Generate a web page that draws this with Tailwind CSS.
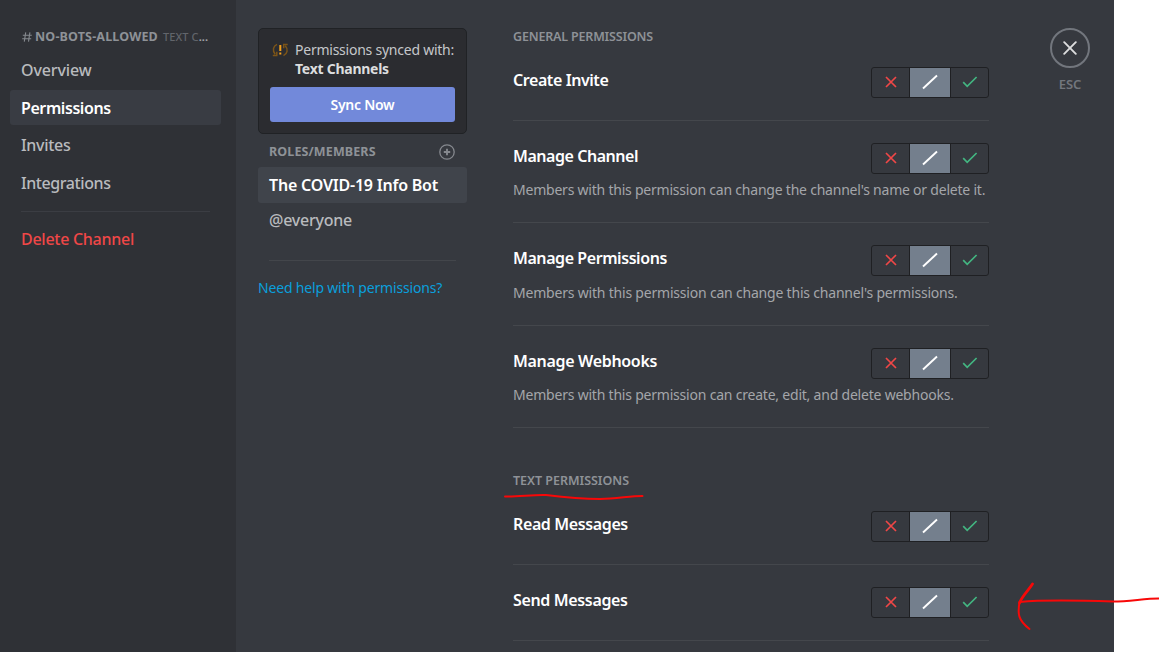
<!DOCTYPE html>
<html lang="en">
<head>
<meta charset="utf-8">
<title>Channel permissions</title>
<script src="https://cdn.jsdelivr.net/npm/@tailwindcss/browser@4"></script>
</head>
<body class="bg-white font-['Noto_Sans',sans-serif] whitespace-nowrap overflow-hidden">
<svg class="hidden">
  <symbol id="deny" viewBox="0 0 12 12"><path d="M1 1 11 11M11 1 1 11" fill="none" stroke="#f04747" stroke-width="1.7"/></symbol>
  <symbol id="pass" viewBox="0 0 16 16"><path d="M1 14.5 15 1.5" fill="none" stroke="#fff" stroke-width="1.9"/></symbol>
  <symbol id="allow" viewBox="0 0 16 12"><path d="M1.2 6.2 5.2 10.3 14.6 1" fill="none" stroke="#43b581" stroke-width="1.7"/></symbol>
</svg>
<div class="relative h-[652px] overflow-hidden">
  <div class="flex h-full w-[1114px] bg-[#36393f]">

    <nav class="w-[236px] shrink-0 bg-[#2f3136] pl-[10px] pt-[27px] text-base leading-5 font-medium text-[#b9bbbe]">
      <div class="flex h-5 items-center pl-[11px] text-xs text-[#8e9297]">
        <svg class="ml-px mr-[3px] size-[10px]" viewBox="0 0 10 10"><path d="M3.700.3 2.300 9.700M7.900.3 6.500 9.700M.8 3.200h9M.2 6.800h9" fill="none" stroke="#85898e" stroke-width="1.100"/></svg>
        <span class="w-[128px] text-[12.5px] font-bold tracking-[0.17px]">NO-BOTS-ALLOWED</span>
        <span class="text-[11px] tracking-[0.1px] text-[#62656b]">TEXT C<b class="text-[#a0a3a8]">...</b></span>
      </div>
      <ul class="mt-[6px] flex flex-col gap-[3px]">
        <li class="flex h-[34px] w-[211px] items-center pl-[11px] tracking-[-0.1px]">Overview</li>
        <li class="flex h-[35px] w-[211px] items-center rounded-[3px] bg-[#393c43] pl-[11px] font-semibold tracking-[-0.42px] text-white">Permissions</li>
        <li class="flex h-[34px] w-[211px] items-center pl-[11px] tracking-[-0.3px]">Invites</li>
        <li class="flex h-[35px] w-[211px] items-center pl-[11px] tracking-[-0.42px]">Integrations</li>
      </ul>
      <div class="ml-[11px] mt-[11px] h-px w-[189px] bg-[#3b3d43]"></div>
      <div class="mt-[10px] flex h-[34px] items-center pl-[11px] tracking-[-0.27px] text-[#f04747]">Delete Channel</div>
    </nav>

    <aside class="ml-[22px] mt-7 w-[209px] shrink-0">
      <div class="h-[106px] rounded-[5px] border border-[#202225] bg-[#2b2c30] px-[11px] pt-[11px]">
        <div class="flex text-sm leading-[19px] text-[#c5c7ca]">
          <svg class="ml-[2px] mt-[2px] mr-[6px] h-[16px] w-[17px]" viewBox="0 0 17 16" fill="none">
            <path d="M5 2.400C1 4.200.2 8.800 3.200 12.200M.8 13.500h4V9.800M11.500 13.600C15.500 11.800 16.300 7.200 13.300 3.800M15.700 2.500h-4v3.700" stroke="#7c5518" stroke-width="1.500"/>
            <path d="M8.300 3v6M8.300 10.500v2" stroke="#f3a01c" stroke-width="2"/>
          </svg>
          <div>
            <div class="tracking-[-0.24px]">Permissions synced with:</div>
            <div class="font-bold tracking-[-0.26px] text-[#dcddde]">Text Channels</div>
          </div>
        </div>
        <button class="mt-[9px] block h-[35px] w-full rounded-[3px] bg-[#7289da] text-sm font-semibold tracking-[-0.26px] text-white">Sync Now</button>
      </div>
      <div class="flex h-[33px] items-center justify-between pl-[11px] pr-3 pt-[3px] text-[12.5px] font-bold tracking-[0.12px] text-[#8e9297]">
        <span class="pt-px">ROLES/MEMBERS</span>
        <svg class="size-4" viewBox="0 0 16 16" fill="none" stroke="#85888e"><circle cx="8" cy="8" r="7.200" stroke-width="1.300"/><path d="M8 4.800v6.400M4.800 8h6.400" stroke-width="1.900"/></svg>
      </div>
      <div class="flex h-9 items-center rounded-[3px] bg-[#40444b] pl-[11px] text-base font-semibold tracking-[-0.21px] text-white">The COVID-19 Info Bot</div>
      <div class="flex h-[35px] items-center pb-[2px] pl-[11px] text-base font-medium tracking-[-0.23px] text-[#b9bbbe]">@everyone</div>
      <div class="ml-[11px] mt-[22px] h-px w-[187px] bg-[#43464b]"></div>
      <a class="mt-[17px] block text-sm tracking-[-0.18px] text-[#0a9fdc]">Need help with permissions?</a>
    </aside>

    <main class="ml-[46px] w-[476px] shrink-0 pt-[27px]">
      <h2 class="h-10 text-[12.5px] leading-5 font-semibold tracking-[-0.18px] text-[#8e9297]">GENERAL PERMISSIONS</h2>
      <div id="general"></div>
      <h2 class="mt-[43px] h-10 text-[12.5px] leading-5 font-semibold tracking-[-0.02px] text-[#8e9297]">TEXT PERMISSIONS</h2>
      <div id="text"></div>
    </main>

    <div class="ml-[61px] mt-7 flex w-10 flex-col items-center">
      <div class="flex size-10 items-center justify-center rounded-full border-2 border-[#72767d]">
        <svg class="size-[14px]" viewBox="0 0 14 14"><path d="M1.200 1.200 12.800 12.800M12.800 1.200 1.200 12.800" stroke="#dcddde" stroke-width="1.900" stroke-linecap="round"/></svg>
      </div>
      <span class="mt-2 text-[13px] leading-4 font-semibold text-[#72767d]">ESC</span>
    </div>
  </div>

  <svg class="absolute inset-0 h-full w-full" viewBox="0 0 1159 652" fill="none" stroke="#f80808" stroke-linecap="round">
    <path d="M505 496.500C520 496.500 534 494.500 546 495C566 497.500 580 499 600 499C618 498.500 630 496 642.500 496" stroke-width="2"/>
    <path d="M1020 602C1040 600 1080 600.500 1113 601.500C1130 601.500 1144 598.500 1159 598.500" stroke-width="2"/>
    <path d="M1032.500 584C1028 591 1022 596 1019.500 603" stroke-width="2.800"/>
    <path d="M1019.500 602C1017.500 614 1018 620 1029.500 629" stroke-width="2"/>
  </svg>
</div>
<script>
const row = (title, titleClass, desc, descClass, rowClass) => `
  <section class="flex flex-col border-b border-[#44474c] ${rowClass}">
    <div class="flex items-start justify-between">
      <h3 class="mt-[3px] text-base leading-5 font-semibold text-white ${titleClass}">${title}</h3>
      <div class="flex h-[31px] w-[118px] overflow-hidden rounded-[3px] border border-[#1f2023]">
        <span class="flex flex-1 items-center justify-center pb-px"><svg class="size-3"><use href="#deny"/></svg></span>
        <span class="flex w-[42px] items-center justify-center border-x border-[#1f2023] bg-[#747f8d] pb-px"><svg class="size-4"><use href="#pass"/></svg></span>
        <span class="flex flex-1 items-center justify-center pb-px"><svg class="h-3 w-4"><use href="#allow"/></svg></span>
      </div>
    </div>
    ${desc ? `<p class="text-sm leading-5 text-[#a4a6aa] ${descClass}">${desc}</p>` : ''}
  </section>`;
document.getElementById('general').innerHTML =
  row('Create Invite', 'tracking-[-0.42px]', '', '', 'h-[54px]') +
  row('Manage Channel', 'tracking-[-0.45px]', "Members with this permission can change the channel's name or delete it.", 'mt-[6px] tracking-[-0.22px]', 'mt-[22px] h-[80px]') +
  row('Manage Permissions', 'tracking-[-0.43px]', "Members with this permission can change this channel's permissions.", 'mt-[7px] tracking-[-0.2px]', 'mt-[22px] h-[81px]') +
  row('Manage Webhooks', 'tracking-[-0.32px]', 'Members with this permission can create, edit, and delete webhooks.', 'mt-[6px] tracking-[-0.21px]', 'mt-[22px] h-[80px]');
document.getElementById('text').innerHTML =
  row('Read Messages', 'tracking-[-0.38px]', '', '', 'h-[54px]') +
  row('Send Messages', 'tracking-[-0.35px]', '', '', 'mt-[22px] h-[54px]');
</script>
</body>
</html>
